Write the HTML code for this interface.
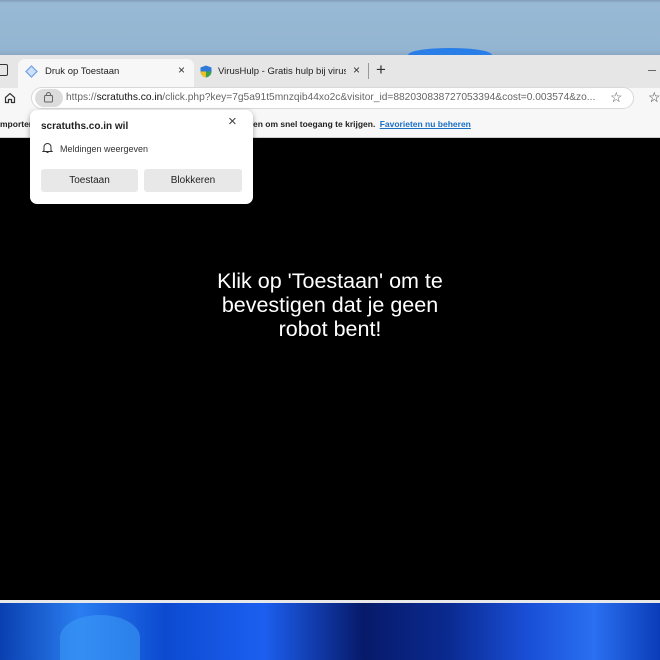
<!DOCTYPE html>
<html><head><style>
*{margin:0;padding:0;box-sizing:border-box}
body{width:660px;height:660px;overflow:hidden;position:relative;font-family:"Liberation Sans",sans-serif;background:#000}
.abs{position:absolute}
</style></head><body>
<div class="abs" style="left:0;top:0;width:660px;height:55px;background:linear-gradient(#7f9bb6 0,#98b9d4 3px,#94b5d1 50px,#8aa8c2 55px)"></div>
<div class="abs" style="left:408px;top:48px;width:84px;height:14px;border-radius:50%;background:#2a7ee8"></div>
<div class="abs" style="left:0;top:55px;width:660px;height:33px;background:#e6e6e6"></div>
<div class="abs" style="left:0;top:64px;width:8px;height:12px;border:1.5px solid #333;border-left:none;border-radius:0 2px 2px 0"></div>
<div class="abs" style="left:18px;top:59px;width:176px;height:30px;background:#f7f7f7;border-radius:7px 7px 0 0"></div>
<svg class="abs" style="left:25px;top:65px" width="13" height="13" viewBox="0 0 13 13"><path d="M6.5 1L12 6.5 6.5 12 1 6.5Z" fill="#cfe0fb" stroke="#6d9ee8" stroke-width="1.2"/></svg>
<div class="abs" style="left:45px;top:66px;font-size:9.5px;color:#222">Druk op Toestaan</div>
<div class="abs" style="left:178px;top:63px;font-size:12px;color:#333">×</div>
<svg class="abs" style="left:200px;top:65px" width="12" height="13" viewBox="0 0 12 13"><path d="M6 0.5L11.5 2.5V6.5C11.5 9.5 9 11.8 6 12.5 3 11.8 0.5 9.5 0.5 6.5V2.5Z" fill="#2f7ad8"/><path d="M6 0.5V12.5C3 11.8 .5 9.5 .5 6.5H6Z" fill="#f0c020"/><path d="M6 6.5H11.5C11.5 9.5 9 11.8 6 12.5Z" fill="#3aa04a"/></svg>
<div class="abs" style="left:218px;top:66px;font-size:9.5px;color:#222;white-space:nowrap;width:128px;overflow:hidden">VirusHulp - Gratis hulp bij virussen</div>
<div class="abs" style="left:353px;top:63px;font-size:12px;color:#333">×</div>
<div class="abs" style="left:368px;top:63px;width:1px;height:16px;background:#999"></div>
<div class="abs" style="left:376px;top:60px;font-size:17px;color:#333">+</div>
<div class="abs" style="left:648px;top:70px;width:8px;height:1px;background:#666"></div>
<div class="abs" style="left:0;top:88px;width:660px;height:50px;background:#f7f7f7"></div>
<svg class="abs" style="left:4px;top:92px" width="12" height="12" viewBox="0 0 12 12"><path d="M1.5 5.5L6 1.5 10.5 5.5V10.5H7.5V7.5H4.5V10.5H1.5Z" fill="none" stroke="#333" stroke-width="1.2"/></svg>
<div class="abs" style="left:31px;top:87px;width:603px;height:22px;border-radius:11px;background:#fff;border:1px solid #d8d8d8"></div>
<div class="abs" style="left:35px;top:89px;width:28px;height:18px;border-radius:9px;background:#dcdcdc"></div>
<svg class="abs" style="left:43px;top:92px" width="11" height="11" viewBox="0 0 11 11"><rect x="1.5" y="3.5" width="8" height="6.5" rx="1" fill="none" stroke="#666"/><path d="M3.5 3.5V2.5A2 2 0 0 1 7.5 2.5V3.5" fill="none" stroke="#666"/></svg>
<div class="abs" style="left:66px;top:92px;font-size:10.2px;color:#666;white-space:nowrap">https://<span style="color:#111">scratuths.co.in</span>/click.php?key=7g5a91t5mnzqib44xo2c&amp;visitor_id=882030838727053394&amp;cost=0.003574&amp;zo...</div>
<div class="abs" style="left:610px;top:89px;font-size:14px;color:#555">☆</div>
<div class="abs" style="left:648px;top:89px;font-size:14px;color:#333">☆</div>
<div class="abs" style="left:0;top:119px;font-size:8.5px;color:#222;font-weight:bold">mportere</div>
<div class="abs" style="left:253px;top:119px;font-size:8.5px;color:#222;font-weight:bold;white-space:nowrap">en om snel toegang te krijgen. <span style="color:#1a6fc6;text-decoration:underline;margin-left:2px">Favorieten nu beheren</span></div>
<div class="abs" style="left:0;top:137px;width:660px;height:1px;background:#ccc"></div>
<div class="abs" style="left:30px;top:110px;width:223px;height:94px;background:#fff;border-radius:7px;box-shadow:0 2px 6px rgba(0,0,0,.35)"></div>
<div class="abs" style="left:41px;top:121px;font-size:10px;font-weight:bold;color:#222">scratuths.co.in wil</div>
<div class="abs" style="left:228px;top:113px;font-size:15px;color:#444">×</div>
<svg class="abs" style="left:42px;top:142px" width="11" height="12" viewBox="0 0 11 12"><path d="M2 8.5V5A3.5 3.5 0 0 1 9 5V8.5L10 9.5H1Z M4.5 10.5H6.5" fill="none" stroke="#333"/></svg>
<div class="abs" style="left:60px;top:144px;font-size:9px;color:#333">Meldingen weergeven</div>
<div class="abs" style="left:41px;top:169px;width:97px;height:23px;background:#e8e8e8;border-radius:3px;font-size:10px;color:#222;text-align:center;line-height:23px">Toestaan</div>
<div class="abs" style="left:144px;top:169px;width:98px;height:23px;background:#e8e8e8;border-radius:3px;font-size:10px;color:#222;text-align:center;line-height:23px">Blokkeren</div>
<div class="abs" style="left:160px;top:269px;width:340px;text-align:center;color:#fff;font-size:21.5px;line-height:24px">Klik op 'Toestaan' om te<br>bevestigen dat je geen<br>robot bent!</div>
<div class="abs" style="left:0;top:600px;width:660px;height:3px;background:#e8e8e8"></div>
<div class="abs" style="left:0;top:603px;width:660px;height:57px;background:linear-gradient(90deg,#0a3fb0 0%,#2a7ef0 12%,#0c4ad0 25%,#1c5ff0 40%,#071a6a 55%,#0a2a90 68%,#1a4fd8 80%,#2a70f0 90%,#0a3cb8 100%)"></div>
<div class="abs" style="left:60px;top:615px;width:80px;height:45px;border-radius:50% 50% 0 0;background:#3a9af5;opacity:.6"></div>
</body></html>
